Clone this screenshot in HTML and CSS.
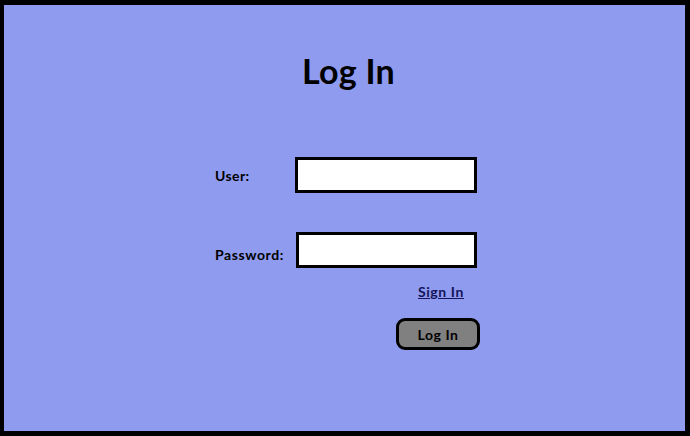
FILE: index.html
```html
<!DOCTYPE html>
<html>
<head>
<meta charset="utf-8">
<link rel="stylesheet" href="styles.css">
</head>
<body>
<div class="frame">
  <h1 class="title">Log In</h1>
  <form class="form">
    <div class="row row-user">
      <label class="label">User:</label>
      <input class="field" type="text">
    </div>
    <div class="row row-pass">
      <label class="label">Password:</label>
      <input class="field field-pass" type="password">
    </div>
    <div class="actions">
      <a class="signin" href="#">Sign In</a>
      <button class="btn" type="button">Log In</button>
    </div>
  </form>
</div>
</body>
</html>
```
FILE: styles.css
```css
html, body {
  margin: 0;
  padding: 0;
}
body {
  width: 690px;
  height: 436px;
  overflow: hidden;
  font-family: Lato, "Open Sans", sans-serif;
}
.frame {
  box-sizing: border-box;
  width: 690px;
  height: 436px;
  background: #8f9bee;
  border: 5px solid #000;
  border-left-width: 4px;
  display: flex;
  flex-direction: column;
  align-items: center;
}
.title {
  margin: 47px 0 0 0;
  font-size: 34px;
  font-weight: 700;
  line-height: 38px;
  color: #000;
  padding-left: 8px;
  letter-spacing: 0.3px;
}
.form {
  margin-top: 67px;
  width: 262px;
  margin-left: 3px;
  display: flex;
  flex-direction: column;
}
.row {
  display: flex;
  align-items: center;
}
.label {
  font-size: 14px;
  font-weight: 700;
  color: #000;
  width: 80px;
  letter-spacing: 0.4px;
}
.field {
  box-sizing: border-box;
  width: 182px;
  height: 36px;
  border: 3px solid #000;
  background: #fff;
  margin: 0;
  padding: 0;
  outline: none;
}
.row-pass {
  margin-top: 39px;
}
.row-pass .label {
  width: 81px;
  position: relative;
  top: 4px;
  letter-spacing: 0.6px;
}
.field-pass {
  width: 181px;
  margin-left: 1px;
}
.actions {
  display: flex;
  flex-direction: column;
  align-items: flex-end;
  margin-top: 16px;
}
.signin {
  font-size: 14px;
  font-weight: 700;
  color: #14145a;
  text-decoration: underline;
  margin-right: 13px;
  line-height: 16px;
  letter-spacing: 0.6px;
}
.btn {
  box-sizing: border-box;
  margin-top: 18px;
  margin-right: -3px;
  width: 84px;
  height: 32px;
  background: #808080;
  border: 3px solid #000;
  border-radius: 9px;
  font-family: Lato, "Open Sans", sans-serif;
  font-size: 14px;
  font-weight: 700;
  color: #000;
  padding: 0;
  letter-spacing: 0.6px;
}
```
